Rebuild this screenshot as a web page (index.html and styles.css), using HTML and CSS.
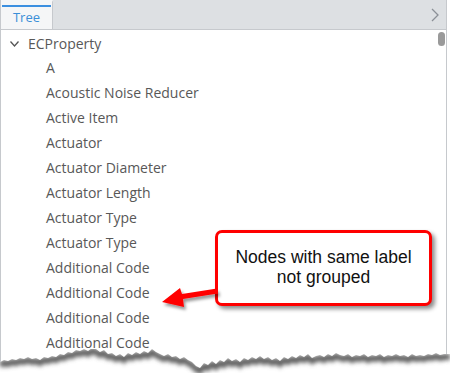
FILE: index.html
```html
<!DOCTYPE html>
<html lang="en">
<head>
<meta charset="UTF-8">
<title>Tree</title>
<link rel="stylesheet" href="styles.css">
</head>
<body>
<div class="panel">
  <div class="tabbar">
    <div class="tab">Tree</div>
    <svg class="tab-next" width="8" height="14" viewBox="0 0 8 14"><path d="M1 1 L7 7 L1 13" fill="none" stroke="#8b9097" stroke-width="1.3"/></svg>
  </div>
  <div class="tree">
    <div class="scroll-thumb"></div>
    <div class="row root">
      <svg class="caret" width="9" height="6" viewBox="0 0 9 6"><path d="M0.5 0.5 L4.5 5 L8.5 0.5" fill="none" stroke="#555" stroke-width="1.3"/></svg>
      <span>ECProperty</span>
    </div>
    <div class="row child">A</div>
    <div class="row child">Acoustic Noise Reducer</div>
    <div class="row child">Active Item</div>
    <div class="row child">Actuator</div>
    <div class="row child">Actuator Diameter</div>
    <div class="row child">Actuator Length</div>
    <div class="row child">Actuator Type</div>
    <div class="row child">Actuator Type</div>
    <div class="row child">Additional Code</div>
    <div class="row child">Additional Code</div>
    <div class="row child">Additional Code</div>
    <div class="row child">Additional Code</div>
    <div class="row child">Additional Code</div>
  </div>
</div>

<div class="callout">Nodes with same label<br>not grouped</div>

<svg class="overlay" width="450" height="377" viewBox="0 0 450 377">
  <defs>
    <filter id="arrowShadow" x="-20%" y="-20%" width="150%" height="160%">
      <feDropShadow dx="2" dy="3" stdDeviation="1.5" flood-color="#000" flood-opacity="0.4"/>
    </filter>
    <filter id="blur"><feGaussianBlur stdDeviation="2.2"/></filter>
    <clipPath id="below">
      <polygon id="tornArea" points="0,377 0,362 4,360 8,361 12,359 16,360 20,358 24,359 28,357 32,359 36,358 40,360 44,357 48,358 52,356 56,357 60,354 64,355 68,352 72,353 76,350 80,351 84,349 88,351 92,348 96,349 100,352 104,350 108,354 112,353 116,356 120,354 124,357 128,353 132,355 136,352 140,354 144,351 148,353 152,349 156,352 160,354 164,356 168,354 172,357 176,356 180,359 184,357 188,360 192,362 196,366 200,368 204,363 208,365 212,361 216,364 220,360 224,362 228,358 232,361 236,359 240,362 244,358 248,360 252,357 256,359 260,356 264,359 268,357 272,360 276,358 280,361 284,357 288,359 292,356 296,358 300,355 304,357 308,354 312,358 316,356 320,355 324,357 328,354 332,356 336,353 340,355 344,356 348,354 352,357 356,355 360,356 364,354 368,357 372,355 376,356 380,354 384,357 388,355 392,356 396,354 400,356 404,355 408,357 412,354 416,356 420,355 424,356 428,354 432,355 436,353 440,355 444,354 450,354 450,377"/>
    </clipPath>
  </defs>
  <g filter="url(#arrowShadow)">
    <path d="M217 288.5 L182 294 L180 288 L162 302 L184 307 L183 299 L218 293.5 Z" fill="#f00"/>
  </g>
  <use href="#tornArea" fill="#fff"/>
  <g clip-path="url(#below)">
    <polyline filter="url(#blur)" fill="none" stroke="#5f5f5f" stroke-width="6" transform="translate(0 3)" points="0,362 4,360 8,361 12,359 16,360 20,358 24,359 28,357 32,359 36,358 40,360 44,357 48,358 52,356 56,357 60,354 64,355 68,352 72,353 76,350 80,351 84,349 88,351 92,348 96,349 100,352 104,350 108,354 112,353 116,356 120,354 124,357 128,353 132,355 136,352 140,354 144,351 148,353 152,349 156,352 160,354 164,356 168,354 172,357 176,356 180,359 184,357 188,360 192,362 196,366 200,368 204,363 208,365 212,361 216,364 220,360 224,362 228,358 232,361 236,359 240,362 244,358 248,360 252,357 256,359 260,356 264,359 268,357 272,360 276,358 280,361 284,357 288,359 292,356 296,358 300,355 304,357 308,354 312,358 316,356 320,355 324,357 328,354 332,356 336,353 340,355 344,356 348,354 352,357 356,355 360,356 364,354 368,357 372,355 376,356 380,354 384,357 388,355 392,356 396,354 400,356 404,355 408,357 412,354 416,356 420,355 424,356 428,354 432,355 436,353 440,355 444,354 450,354"/>
  </g>
</svg>
</body>
</html>
```

FILE: styles.css
```css
html, body {
  margin: 0;
  width: 450px;
  height: 377px;
  overflow: hidden;
  background: #fff;
}
body {
  position: relative;
  font-family: 'Open Sans', sans-serif;
}
.panel {
  width: 445px;
  height: 377px;
  border-left: 1px solid #c6c9cd;
  border-right: 1px solid #c6c9cd;
  background: #fff;
}
.tabbar {
  height: 29px;
  background: #dde0e3;
  border-bottom: 1px solid #c6c9cd;
  display: flex;
  align-items: stretch;
  justify-content: space-between;
}
.tab {
  width: 52px;
  background: #f5f6f7;
  border-right: 1px solid #c6c9cd;
  border-top: 2px solid transparent;
  position: relative;
  color: #3b8fd8;
  font-size: 13px;
  line-height: 29px;
  text-align: center;
  box-sizing: border-box;
  padding-top: 1px;
}
.tab::before {
  content: "";
  position: absolute;
  left: 1px;
  right: 1px;
  top: 3px;
  height: 2px;
  background: #3b8fe0;
}
.tab-next {
  align-self: center;
  margin-right: 7px;
}
.tree {
  position: relative;
  padding-top: 1px;
}
.scroll-thumb {
  position: absolute;
  right: 1px;
  top: 2px;
  width: 7px;
  height: 14px;
  border-radius: 4px;
  background: #9a9a9a;
}
.row {
  height: 25px;
  line-height: 25px;
  font-size: 14px;
  color: #585858;
  white-space: nowrap;
}
.root {
  height: 24px;
  display: flex;
  align-items: center;
  padding-left: 9px;
}
.caret {
  margin-right: 9px;
  margin-top: 1px;
}
.child {
  padding-left: 45px;
}
.callout {
  position: absolute;
  left: 215px;
  top: 230px;
  width: 211px;
  height: 56px;
  padding-top: 14px;
  border: 3px solid #f00;
  border-radius: 7px;
  background: #fff;
  box-shadow: 3px 3px 4px rgba(0, 0, 0, 0.45);
  font-family: 'Liberation Sans', Arial, sans-serif;
  font-size: 17.5px;
  line-height: 20px;
  text-align: center;
  color: #111;
}
.overlay {
  position: absolute;
  left: 0;
  top: 0;
}
```
